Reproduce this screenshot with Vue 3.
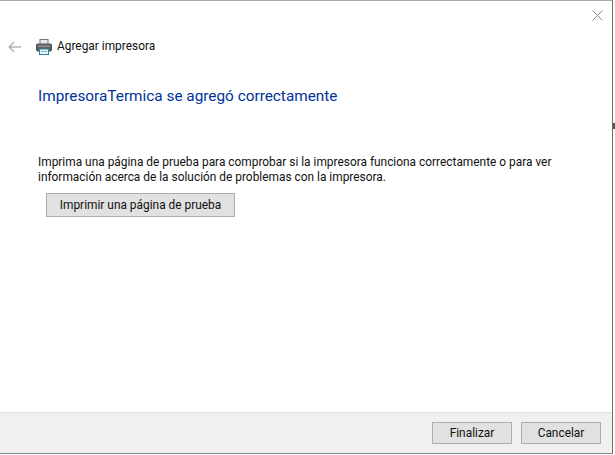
<template>
  <div class="window">
    <div class="main">
      <button class="close" aria-label="Cerrar">
        <svg width="11" height="11" viewBox="0 0 11 11"><path d="M0.5 0.5L10.5 10.5M10.5 0.5L0.5 10.5" stroke="#8a8a8a" stroke-width="1" fill="none"/></svg>
      </button>
      <div class="nav">
        <svg class="back" width="14" height="12" viewBox="0 0 14 12"><path d="M6 1L1.2 6L6 11M1.2 6H13" stroke="#b4b4b4" stroke-width="1.5" fill="none"/></svg>
        <svg class="printer" width="16" height="16" viewBox="0 0 16 16">
          <rect x="4" y="0.5" width="8" height="5" fill="#e8e8e8" stroke="#777"/>
          <rect x="0.5" y="5" width="15" height="7" rx="1" fill="#5f6368" stroke="#50545a"/>
          <rect x="2" y="6.5" width="12" height="1.5" fill="#8c9096"/>
          <rect x="3.5" y="10" width="9" height="5.5" fill="#eaf6fa" stroke="#2f7f96"/>
          <rect x="5" y="12" width="6" height="1" fill="#7fb4c4"/>
        </svg>
        <span class="nav-title">Agregar impresora</span>
      </div>
      <h1 class="heading">ImpresoraTermica se agregó correctamente</h1>
      <p class="desc">Imprima una página de prueba para comprobar si la impresora funciona correctamente o para ver información acerca de la solución de problemas con la impresora.</p>
      <button class="btn test">Imprimir una página de prueba</button>
    </div>
    <div class="footer">
      <button class="btn action">Finalizar</button>
      <button class="btn action">Cancelar</button>
    </div>
    <div class="edge"></div>
  </div>
</template>

<script setup>
</script>

<style>
html, body { margin: 0; background: #fff; overflow: hidden; }
</style>

<style scoped>
.window {
  position: relative;
  width: 613px;
  height: 454px;
  box-sizing: border-box;
  border-top: 1px solid #a9a9a9;
  border-right: 1px solid #6f6f6f;
  border-bottom: 1px solid #8a8a8a;
  display: flex;
  flex-direction: column;
  font-family: Roboto, sans-serif;
  color: #111;
  background: #fff;
}
.edge {
  position: absolute;
  left: 613px;
  top: 122px;
  width: 2px;
  height: 6px;
  background: #555;
}
.main {
  position: relative;
  flex: 1;
  padding: 0 38px;
}
.close {
  position: absolute;
  top: 9px;
  right: 9px;
  width: 11px;
  height: 11px;
  padding: 0;
  border: 0;
  background: none;
  display: block;
}
.close svg { display: block; }
.nav {
  display: flex;
  align-items: center;
  margin: 37px 0 0 -30px;
  height: 17px;
}
.back { margin-right: 14px; }
.printer { margin-right: 5px; }
.nav-title { font-size: 11.9px; line-height: 17px; }
.heading {
  margin: 30px 0 0;
  font-size: 15.35px;
  font-weight: 400;
  line-height: 22px;
  color: #003399;
}
.desc {
  margin: 48px 0 0;
  font-size: 11.9px;
  line-height: 15px;
  width: 530px;
}
.btn {
  box-sizing: border-box;
  height: 24px;
  background: #e1e1e1;
  border: 1px solid #adadad;
  font-family: inherit;
  font-size: 11.9px;
  color: #111;
  padding: 0;
}
.test {
  display: block;
  width: 189px;
  margin: 8px 0 0 8px;
}
.footer {
  height: 41px;
  box-sizing: border-box;
  background: #f0f0f0;
  border-top: 1px solid #dfdfdf;
  display: flex;
  justify-content: flex-end;
  align-items: center;
  gap: 9px;
  padding: 0 11px 0 0;
}
.action { width: 80px; height: 22px; }
</style>
